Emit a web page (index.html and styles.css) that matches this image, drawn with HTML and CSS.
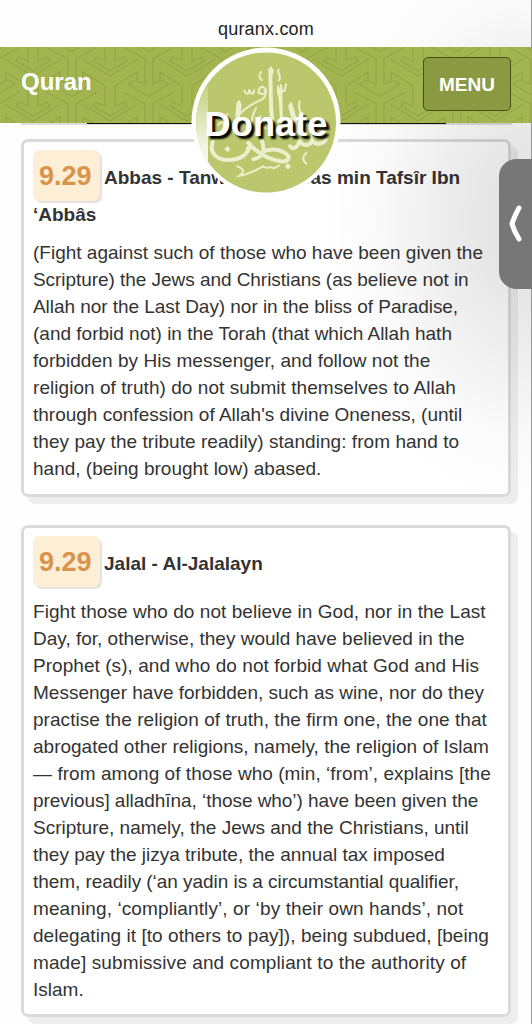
FILE: index.html
```
<!DOCTYPE html>
<html lang="en">
<head>
<meta charset="utf-8">
<title>quranx.com</title>
<link rel="stylesheet" href="styles.css">
</head>
<body>
<div class="screen">
  <div class="address">quranx.com</div>
  <header class="bar">
    <svg class="pattern" width="532" height="76" aria-hidden="true">
      <defs>
        <path id="knot" d="M33 -6V14L24 10L21 14L38 24L55 14L52 10L43 14V-6L65 -20V-11L73 -8V-33L51 -45M33 -6L11 -20V-11L4 -8V-33L25 -45M10 12L38 29L66 12M56 -8L66 -13M56 -8L77 5M20 -8L10 -13M20 -8L-1 5"/>
        <pattern id="lattice" width="77" height="45" patternUnits="userSpaceOnUse" patternTransform="translate(72 0)">
          <use href="#knot"/><use href="#knot" y="45"/><use href="#knot" x="-77" y="45"/><use href="#knot" x="77" y="45"/>
        </pattern>
      </defs>
      <rect width="532" height="76" fill="url(#lattice)"/>
    </svg>
    <span class="brand">Quran</span>
    <span class="menu">MENU</span>
    <svg class="seal" width="150" height="150" viewBox="0 0 150 150">
      <defs>
        <clipPath id="disc"><circle cx="75" cy="75.500" r="70"/></clipPath>
        <linearGradient id="sheen" x1="0" x2="0" y1="0" y2="1"><stop offset=".2" stop-color="#bdca72"/><stop offset=".65" stop-color="#f2f5df"/><stop offset="1" stop-color="#fff"/></linearGradient>
      </defs>
      <circle cx="75" cy="75" r="74.500" fill="#fff"/>
      <g clip-path="url(#disc)">
        <rect width="150" height="150" fill="#bac76c"/>
        <rect width="17" height="150" fill="url(#sheen)"/>
      </g>
      <g class="script" transform="translate(9 13) scale(.3333)">
        <path class="solid" d="M205 27L214 19L222 32L217 48L219 135L226 218L214 226L207 140ZM232 88L241 80L247 91L248 166L253 220L242 220L237 130ZM264 137L274 124L283 150L300 218L286 222ZM110 127L119 119L125 136L120 165L124 220L111 220L106 165Z"/>
        <path class="broad" d="M38 246C27 277 48 299 82 300C119 301 146 285 150 252M145 249C171 280 211 300 243 304C265 306 273 292 258 281C236 265 212 266 190 274M270 259C276 269 294 266 299 240C306 262 332 258 336 240C344 258 370 252 377 240M186 242C196 276 190 290 160 298"/>
        <path class="fine" d="M82 162C67 190 69 211 81 221M133 92C142 108 148 102 147 88C153 109 162 101 162 91M176 99C174 87 185 75 191 82C208 91 193 111 179 98M119 163C136 140 158 132 180 121C196 115 200 101 194 91M168 145C153 173 149 204 165 222M183 36C175 49 178 56 186 60M236 29C228 38 247 47 237 61M234 79V101M242 74L246 96L254 92L258 73M112 319C137 329 132 335 117 348C152 342 171 329 190 319C200 330 214 315 221 325L237 317M319 278C305 290 309 305 319 311M181 169C176 183 187 197 196 205M299 124C291 144 307 155 301 175M54 195C67 178 83 190 69 207"/>
        <path class="solid" d="M82 258L91 267L83 277L73 267ZM145 256L154 266L145 276L136 266ZM263 309L273 319L264 329L254 319Z"/>
      </g>
      <text class="donate" x="13.500" y="89" textLength="123" lengthAdjust="spacingAndGlyphs">Donate</text>
    </svg>
  </header>
  <div class="previous"><div class="previous-line"></div></div>
  <main class="cards">
    <article class="card first">
      <h2 class="title"><span class="verse">9.29</span><span class="name">Abbas - Tanwîr al-Miqbâs min Tafsîr Ibn</span></h2>
      <div class="title-rest">‘Abbâs</div>
      <p class="body">(Fight against such of those who have been given the<br><span class="tight">Scripture) the Jews and Christians (as believe not in</span><br><span class="tight">Allah nor the Last Day) nor in the bliss of Paradise,</span><br>(and forbid not) in the Torah (that which Allah hath<br><span class="loose">forbidden by His messenger, and follow not the</span><br><span class="loose">religion of truth) do not submit themselves to Allah</span><br>through confession of Allah's divine Oneness, (until<br><span class="loose">they pay the tribute readily) standing: from hand to</span><br>hand, (being brought low) abased.</p>
    </article>
    <article class="card">
      <h2 class="title"><span class="verse">9.29</span><span class="name">Jalal - Al-Jalalayn</span></h2>
      <p class="body"><span class="loose">Fight those who do not believe in God, nor in the Last</span><br>Day, for, otherwise, they would have believed in the<br><span class="loose">Prophet (s), and who do not forbid what God and His</span><br>Messenger have forbidden, such as wine, nor do they<br><span class="loose">practise the religion of truth, the firm one, the one that</span><br>abrogated other religions, namely, the religion of Islam<br><span class="loose">— from among of those who (min, ‘from’, explains [the</span><br><span class="tight">previous] alladhīna, ‘those who’) have been given the</span><br>Scripture, namely, the Jews and the Christians, until<br>they pay the jizya tribute, the annual tax imposed<br><span class="tight">them, readily (‘an yadin is a circumstantial qualifier,</span><br><span class="looser">meaning, ‘compliantly’, or ‘by their own hands’, not</span><br><span class="loose">delegating it [to others to pay]), being subdued, [being</span><br><span class="looser">made] submissive and compliant to the authority of</span><br>Islam.</p>
    </article>
  </main>
  <div class="haze"></div>
  <div class="edge"></div>
  <div class="drawer"><svg width="33" height="130" viewBox="0 0 33 130"><path d="M20 49Q15 58 13 65Q15 72 20 80"/></svg></div>
</div>
</body>
</html>
```
FILE: styles.css
```
* { box-sizing: border-box; }
body { margin: 0; background: #fefefe; font-family: "Liberation Sans", Arial, sans-serif; color: #333; }
.screen { position: relative; width: 532px; height: 1024px; overflow: hidden; }
.address { height: 47px; padding-top: 18px; text-align: center; font-size: 18px; line-height: 22px; letter-spacing: .2px; color: #222; }
.bar { position: relative; z-index: 3; display: flex; justify-content: space-between; height: 76px; padding: 10px 21px 0; background: #a3b550; color: #fff; }
.pattern { position: absolute; left: 0; top: 0; }
#knot { fill: none; stroke: #95a645; stroke-width: 1.3; }
.brand { position: relative; margin-top: 11px; font-size: 24px; line-height: 28px; font-weight: bold; }
.menu { position: relative; width: 88px; height: 54px; border: 1.5px solid #465018; border-radius: 5px; background: #8c9943; font-weight: bold; font-size: 19px; line-height: 53px; text-align: center; }
.seal { position: absolute; left: 191px; top: 0; }
.script { color: #ebf0cc; }
.solid { fill: currentColor; }
.broad { fill: none; stroke: currentColor; stroke-width: 12; stroke-linecap: round; }
.fine { fill: none; stroke: currentColor; stroke-width: 6; stroke-linecap: round; }
.donate { font-size: 35px; font-weight: bold; fill: #fff; text-shadow: 3px 3px 2px #000; }
.previous { width: 491px; height: 2px; margin-left: 21px; padding-left: 66px; background: #ddd; }
.previous-line { width: 359px; height: 1px; background: #111; }
.cards { display: flex; flex-direction: column; gap: 28px; padding: 14px 21px 0 21px; }
.card { height: 492px; padding: 8px 0 0 9px; border: 3px solid #dadada; border-radius: 7px; background: #fff; box-shadow: 7px 7px 0 #eee; }
.card.first { height: 358px; }
.title { display: flex; gap: 4px; height: 51px; margin: 0; }
.verse { width: 67px; height: 51px; padding-left: 6px; border-radius: 7px; background: #fcefd6; box-shadow: 2px 2px 1px #e5e1dc; color: #d9934b; font-size: 27px; line-height: 52px; }
.name { font-size: 19px; line-height: 56px; white-space: nowrap; }
.title-rest { height: 27px; font-size: 19px; line-height: 27px; font-weight: bold; }
.body { margin: 11px 0 0; font-size: 19px; line-height: 27px; white-space: nowrap; }
.tight { letter-spacing: -.05px; }
.loose { letter-spacing: .05px; }
.looser { letter-spacing: .11px; }
.haze { position: absolute; z-index: 2; top: 0; right: 0; width: 220px; height: 520px; background: radial-gradient(ellipse 210px 290px at 100% 220px, rgba(0,0,0,.13), rgba(0,0,0,.075) 40%, rgba(0,0,0,.02) 75%, transparent); }
.edge { position: absolute; z-index: 4; top: 0; right: 0; width: 1px; height: 1024px; background: #999; }
.drawer { position: absolute; z-index: 5; top: 159px; right: 0; width: 33px; height: 130px; border-radius: 18px 0 0 18px / 17px 0 0 17px; background: #777; }
.drawer path { fill: none; stroke: #fff; stroke-width: 5; stroke-linecap: round; }
```
